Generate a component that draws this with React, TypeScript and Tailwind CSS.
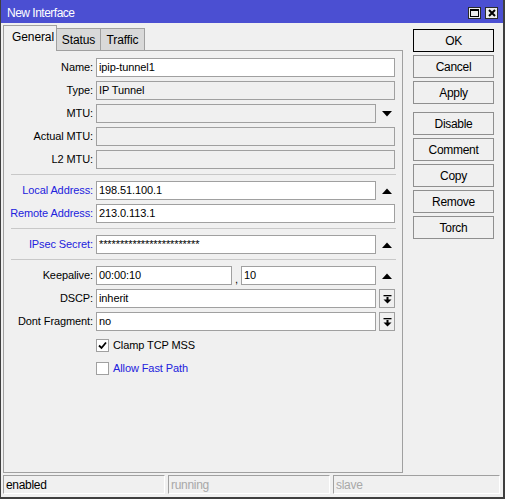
import React from 'react';

const BLUE_LABEL = 'text-[#2222dd]';

function UpArrow() {
  return (
    <svg width="10" height="6" viewBox="0 0 10 6">
      <polygon points="0,6 10,6 5,0.5" fill="#000" />
    </svg>
  );
}

function DownArrow() {
  return (
    <svg width="10" height="6" viewBox="0 0 10 6">
      <polygon points="0,0 10,0 5,5.5" fill="#000" />
    </svg>
  );
}

function DropButton() {
  return (
    <div className="ml-[3px] w-[16px] h-[19px] border border-[#a0a0a0] bg-[#f0f0f0] flex items-center justify-center">
      <svg width="9" height="10" viewBox="0 0 9 10">
        <rect x="0.5" y="1" width="8" height="1.3" fill="#000" />
        <rect x="3.5" y="3" width="2" height="3" fill="#000" />
        <polygon points="0.5,5.5 8.5,5.5 4.5,9.5" fill="#000" />
      </svg>
    </div>
  );
}

function Label({ text, blue }: { text: string; blue?: boolean }) {
  return (
    <div className={`w-[89px] shrink-0 text-right whitespace-nowrap ${blue ? BLUE_LABEL : 'text-black'}`}>
      {text}
    </div>
  );
}

function Field({ value, readOnly, w }: { value?: string; readOnly?: boolean; w: string }) {
  return (
    <div
      className={`${w} h-[19px] border border-[#a0a0a0] px-[2px] flex items-center whitespace-nowrap overflow-hidden ${
        readOnly ? 'bg-[#f0f0f0]' : 'bg-white'
      }`}
    >
      {value}
    </div>
  );
}

function Row({ children }: { children: React.ReactNode }) {
  return <div className="flex items-center h-[19px]">{children}</div>;
}

function Sep() {
  return <div className="ml-[7px] mr-[6px] mt-[5px] mb-[6px] h-px bg-[#c8c8c8]" />;
}

function Check({ label, checked, blue }: { label: string; checked?: boolean; blue?: boolean }) {
  return (
    <div className="flex items-center h-[13px] pl-[92px]">
      <div className="w-[13px] h-[13px] border border-[#a0a0a0] bg-white flex items-center justify-center">
        {checked && (
          <svg width="9" height="9" viewBox="0 0 9 9">
            <polyline points="1,4.5 3.5,7 8,1.5" fill="none" stroke="#000" strokeWidth="1.8" />
          </svg>
        )}
      </div>
      <span className={`ml-[4px] ${blue ? BLUE_LABEL : 'text-black'}`}>{label}</span>
    </div>
  );
}

const buttons = [
  ['OK', 'Cancel', 'Apply'],
  ['Disable', 'Comment', 'Copy', 'Remove', 'Torch'],
];

export default function App() {
  return (
    <div
      className="w-[505px] h-[499px] bg-[#f0f0f0] border-l border-r-2 border-b-2 border-[#3f3f3f] flex flex-col text-[11px] tracking-[-0.1px] text-black select-none"
      style={{ fontFamily: '"Liberation Sans", Arial, sans-serif' }}
    >
      {/* title bar */}
      <div className="h-[23px] shrink-0 bg-[#4b4fd2] flex items-center pl-[6px] pr-[5px]">
        <span className="text-white text-[12px] tracking-[-0.5px] pt-[2px]">New Interface</span>
        <div className="ml-auto flex gap-[4px] pt-[2px]">
          <div className="w-[13px] h-[12px] bg-[#ececec] border border-[#2b2b2b] flex items-center justify-center">
            <div className="w-[9px] h-[8px] border border-black border-t-2" />
          </div>
          <div className="w-[13px] h-[12px] bg-[#ececec] border border-[#2b2b2b] flex items-center justify-center">
            <svg width="8" height="8" viewBox="0 0 8 8">
              <path d="M1 1 L7 7 M7 1 L1 7" stroke="#000" strokeWidth="2" />
            </svg>
          </div>
        </div>
      </div>

      <div className="flex pl-[2px] pt-[2px]">
        {/* left */}
        <div className="w-[400px] flex flex-col">
          <div className="h-[25px] flex items-end">
            <div className="relative z-10 h-[26px] -mb-px w-[54px] border border-b-0 border-[#a0a0a0] bg-[#f0f0f0] flex items-center pl-[8px] pb-[4px] text-[12px]">
              General
            </div>
            <div className="h-[22px] w-[44px] border border-l-0 border-b-0 border-[#a0a0a0] bg-[#d9d9d9] flex items-center justify-center text-[12px]">
              Status
            </div>
            <div className="h-[22px] w-[44px] border border-l-0 border-b-0 border-[#a0a0a0] bg-[#d9d9d9] flex items-center justify-center text-[12px]">
              Traffic
            </div>
          </div>
          <div className="h-[423px] border border-[#a0a0a0] pt-[7px] flex flex-col">
            <div className="flex flex-col gap-[4px]">
              <Row>
                <Label text="Name:" />
                <div className="ml-[3px]"><Field value="ipip-tunnel1" w="w-[299px]" /></div>
              </Row>
              <Row>
                <Label text="Type:" />
                <div className="ml-[3px]"><Field value="IP Tunnel" readOnly w="w-[299px]" /></div>
              </Row>
              <Row>
                <Label text="MTU:" />
                <div className="ml-[3px]"><Field readOnly w="w-[280px]" /></div>
                <div className="w-[19px] flex justify-center pl-[2px]"><DownArrow /></div>
              </Row>
              <Row>
                <Label text="Actual MTU:" />
                <div className="ml-[3px]"><Field readOnly w="w-[299px]" /></div>
              </Row>
              <Row>
                <Label text="L2 MTU:" />
                <div className="ml-[3px]"><Field readOnly w="w-[299px]" /></div>
              </Row>
            </div>
            <Sep />
            <div className="flex flex-col gap-[4px]">
              <Row>
                <Label text="Local Address:" blue />
                <div className="ml-[3px]"><Field value="198.51.100.1" w="w-[280px]" /></div>
                <div className="w-[19px] flex justify-center pl-[2px]"><UpArrow /></div>
              </Row>
              <Row>
                <Label text="Remote Address:" blue />
                <div className="ml-[3px]"><Field value="213.0.113.1" w="w-[299px]" /></div>
              </Row>
            </div>
            <Sep />
            <Row>
              <Label text="IPsec Secret:" blue />
              <div className="ml-[3px]"><Field value="************************" w="w-[280px]" /></div>
              <div className="w-[19px] flex justify-center pl-[2px]"><UpArrow /></div>
            </Row>
            <Sep />
            <div className="flex flex-col gap-[4px]">
              <Row>
                <Label text="Keepalive:" />
                <div className="ml-[3px]"><Field value="00:00:10" w="w-[136px]" /></div>
                <div className="w-[9px] text-center self-end leading-[12px]">,</div>
                <Field value="10" w="w-[135px]" />
                <div className="w-[19px] flex justify-center pl-[2px]"><UpArrow /></div>
              </Row>
              <Row>
                <Label text="DSCP:" />
                <div className="ml-[3px]"><Field value="inherit" w="w-[280px]" /></div>
                <DropButton />
              </Row>
              <Row>
                <Label text="Dont Fragment:" />
                <div className="ml-[3px]"><Field value="no" w="w-[280px]" /></div>
                <DropButton />
              </Row>
            </div>
            <div className="mt-[8px] flex flex-col gap-[10px]">
              <Check label="Clamp TCP MSS" checked />
              <Check label="Allow Fast Path" blue />
            </div>
          </div>
        </div>

        {/* right buttons */}
        <div className="ml-[10px] pt-[4px] w-[81px] flex flex-col gap-[8px]">
          {buttons.map((group, gi) => (
            <div key={gi} className="flex flex-col gap-[3px]">
              {group.map((b) => (
                <div
                  key={b}
                  className={`h-[23px] border flex items-center justify-center text-[12px] tracking-[-0.3px] ${
                    b === 'OK' ? 'border-black' : 'border-[#8f8f8f]'
                  }`}
                >
                  {b}
                </div>
              ))}
            </div>
          ))}
        </div>
      </div>

      {/* status bar */}
      <div className="mt-[2px] ml-[2px] mr-[3px] flex gap-[3px] h-[19px] text-[12px] tracking-[-0.3px]">
        <div className="w-[162px] border-t border-l border-[#a0a0a0] border-r border-b border-r-white border-b-white flex items-center pl-[2px] text-black">
          enabled
        </div>
        <div className="w-[162px] border-t border-l border-[#a0a0a0] border-r border-b border-r-white border-b-white flex items-center pl-[2px] text-[#a8a8a8]">
          running
        </div>
        <div className="flex-1 border-t border-l border-[#a0a0a0] border-r border-b border-r-white border-b-white flex items-center pl-[2px] text-[#a8a8a8]">
          slave
        </div>
      </div>
    </div>
  );
}
